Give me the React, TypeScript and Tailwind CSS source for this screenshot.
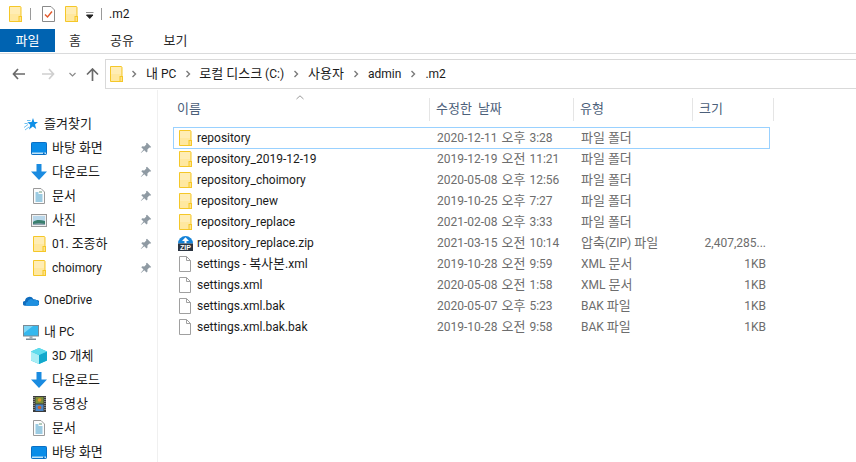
import React from "react";

const FONT = '"Roboto", "Noto Sans CJK KR", sans-serif';

/* Hangul in the picture runs on a 12px advance, wider than the latin beside it. */
function T({ children }: { children: string }) {
  const parts = children.split(/([\uac00-\ud7a3]+)/);
  return (
    <>
      {parts.map((p, i) =>
        i % 2 === 1 ? (
          <span key={i} className="text-[13px]">{p}</span>
        ) : (
          <React.Fragment key={i}>{p}</React.Fragment>
        )
      )}
    </>
  );
}

function Folder() {
  return (
    <svg width="13" height="16" viewBox="0 0 13 16">
      <path d="M.5.500h10.500a1 1 0 0 1 1 .8V15.500H.5z" fill="#ffe8a0" stroke="#f5c728" />
      <path d="M1 1h10v7H1z" fill="#ffedb5" />
      <rect x="10" y="10.500" width="2.500" height="5" fill="#ffe28a" stroke="#f5c728" />
    </svg>
  );
}

function Chevron() {
  return (
    <svg width="6" height="8" viewBox="0 0 6 8">
      <path d="M1.500 1l3 3-3 3" fill="none" stroke="#7a7a7a" strokeWidth="1.400" />
    </svg>
  );
}

function Pin() {
  return (
    <svg width="12" height="12" viewBox="0 0 12 12" className="mr-[5px] ml-auto">
      <path d="M7 .800l4.200 4.200-1.100.8-.7-.4-2 2 .1 2-1 1-2.200-2.200L1 11l-.2-.2 2.700-3.300L1.300 5.300l1-1 2 .1 2-2-.3-.8z" fill="#8f9aa3" />
    </svg>
  );
}

function Desktop() {
  return (
    <svg width="16" height="13" viewBox="0 0 16 13">
      <rect x=".5" y=".5" width="15" height="12" rx=".8" fill="#0a8de8" stroke="#0a6fc4" />
      <rect x="1" y="10.500" width="14" height="1.500" fill="#bfe3f8" />
      <rect x="12" y="10.500" width="1.500" height="1.500" fill="#0a6fc4" />
    </svg>
  );
}

function Download() {
  return (
    <svg width="16" height="16" viewBox="0 0 16 16">
      <path d="M5.500 0h5v7.500H16L8 16 0 7.500h5.500z" fill="#1a8be0" />
    </svg>
  );
}

function Doc() {
  return (
    <svg width="12" height="16" viewBox="0 0 12 16">
      <path d="M.5.500h7.500l3.500 3.500v11.500H.5z" fill="#fbfcfd" stroke="#9a9a9a" />
      <path d="M2.500 5h3M2.500 7h7M2.500 9h7M2.500 11h7M2.500 13h7" stroke="#3d9ac7" strokeWidth="1" />
      <path d="M6 4h3" stroke="#6a9a78" />
    </svg>
  );
}

function Pictures() {
  return (
    <svg width="16" height="13" viewBox="0 0 16 13">
      <rect x=".5" y=".5" width="15" height="12" fill="#f0f0f0" stroke="#979797" />
      <rect x="2" y="2" width="12" height="9" fill="#b9d7ea" />
      <path d="M2 8c3-2.500 7-2.500 12-1v4H2z" fill="#3a7f6e" />
      <path d="M2 10c4-1 8-1 12 0v1H2z" fill="#8fa3b0" />
    </svg>
  );
}

function Star() {
  return (
    <svg width="14" height="13" viewBox="0 0 14 13">
      <path d="M9 0l1.300 4 3.700.1-3 2.500 1.200 4.400-3.400-2.500L5 11.500l1.300-4.700-3-2.600 4.300-.2z" fill="#0f8fe6" />
      <path d="M0 9.500l4-3M.5 5.500h3M3 2.500h3.500M1 12l4-3" stroke="#6fc0f0" strokeWidth="1" />
    </svg>
  );
}

function Cloud() {
  return (
    <svg width="17" height="11" viewBox="0 0 17 11">
      <path d="M2.500 11a2.500 2.500 0 0 1-.4-5 4.800 4.800 0 0 1 9-1.800 3.500 3.500 0 0 1 3 .8 3 3 0 0 1 .9 6z" fill="#0f6cbd" />
      <path d="M5 11a2 2 0 0 1-.2-4 3.500 3.500 0 0 1 6.300-1.500 3 3 0 0 1 4.700 1A2.500 2.500 0 0 1 15 11z" fill="#1e90e0" />
    </svg>
  );
}

function Pc() {
  return (
    <svg width="16" height="15" viewBox="0 0 16 15">
      <rect x=".5" y=".5" width="15" height="10.500" fill="#35b8ee" stroke="#7a8a94" />
      <path d="M1 1h9L1 8z" fill="#7fd6f6" />
      <rect x="6.500" y="11" width="3" height="2.500" fill="#a3aeb5" />
      <rect x="3" y="13.500" width="10" height="1.500" fill="#7a8a94" />
    </svg>
  );
}

function Cube() {
  return (
    <svg width="16" height="16" viewBox="0 0 16 16">
      <path d="M8 0l8 3.500v9L8 16 0 12.500v-9z" fill="#25c6e0" />
      <path d="M0 3.500L8 7v9L0 12.500z" fill="#aaeef5" />
      <path d="M8 7l8-3.500v9L8 16z" fill="#12a8cc" />
      <path d="M8 0l8 3.500L8 7 0 3.500z" fill="#5fdcec" />
    </svg>
  );
}

function Film() {
  return (
    <svg width="13" height="16" viewBox="0 0 13 16">
      <rect width="13" height="16" fill="#3b3b3b" />
      <rect x="2.500" y="1" width="8" height="6.500" fill="#7c8f3a" />
      <rect x="2.500" y="8.500" width="8" height="6.500" fill="#4a86c8" />
      <circle cx="6.500" cy="4" r="1.800" fill="#e09a2a" />
      <circle cx="6.500" cy="11.500" r="1.800" fill="#c9622a" />
      <path d="M1 1v14M12 1v14" stroke="#c8c8c8" strokeWidth="1" strokeDasharray="1 1" />
    </svg>
  );
}

function Zip() {
  return (
    <svg width="15" height="15" viewBox="0 0 15 15">
      <path d="M7.500 0a7.500 7.500 0 0 1 7.500 7.500H0A7.500 7.500 0 0 1 7.500 0z" fill="#1583d8" />
      <path d="M7.500 1.200L11 5H8.500v2.500h-2V5H4z" fill="#fff" />
      <rect y="7.500" width="15" height="7.500" fill="#2b3440" />
      <text x="7.500" y="14" textAnchor="middle" fontSize="7" fontWeight="700" fill="#fff" fontFamily="Liberation Sans">ZIP</text>
    </svg>
  );
}

function BlankFile() {
  return (
    <svg width="12" height="16" viewBox="0 0 12 16">
      <path d="M.5.500h7l4 4v11H.5z" fill="#fff" stroke="#a0a0a0" />
      <path d="M7.500.500v4h4" fill="none" stroke="#a0a0a0" />
    </svg>
  );
}

function CheckDoc() {
  return (
    <svg width="13" height="16" viewBox="0 0 13 16">
      <path d="M.5.500h8.500l3.500 3.500v11.500H.5z" fill="#fff" stroke="#8a8a8a" />
      <path d="M3 8.500l2.500 2.500 4.500-5.500" fill="none" stroke="#e2582b" strokeWidth="1.400" />
    </svg>
  );
}

function NavItem({
  icon,
  label,
  pinned = false,
}: {
  icon: React.ReactNode;
  label: string;
  pinned?: boolean;
}) {
  return (
    <div className="flex h-[24px] items-center pl-[31px]">
      <span className="flex w-[16px] justify-center">{icon}</span>
      <span className="ml-[5px] text-[12px] text-[#1a1a1a]"><T>{label}</T></span>
      {pinned && <Pin />}
    </div>
  );
}

function NavHead({ icon, label }: { icon: React.ReactNode; label: string }) {
  return (
    <div className="flex h-[24px] items-center pl-[23px]">
      <span className="flex w-[16px] justify-center">{icon}</span>
      <span className="ml-[5px] text-[12px] text-[#1a1a1a]"><T>{label}</T></span>
    </div>
  );
}

type Row = { name: string; date: string; type: string; size: string; icon: "folder" | "zip" | "file" };

const rows: Row[] = [
  { name: "repository", date: "2020-12-11 오후 3:28", type: "파일 폴더", size: "", icon: "folder" },
  { name: "repository_2019-12-19", date: "2019-12-19 오전 11:21", type: "파일 폴더", size: "", icon: "folder" },
  { name: "repository_choimory", date: "2020-05-08 오후 12:56", type: "파일 폴더", size: "", icon: "folder" },
  { name: "repository_new", date: "2019-10-25 오후 7:27", type: "파일 폴더", size: "", icon: "folder" },
  { name: "repository_replace", date: "2021-02-08 오후 3:33", type: "파일 폴더", size: "", icon: "folder" },
  { name: "repository_replace.zip", date: "2021-03-15 오전 10:14", type: "압축(ZIP) 파일", size: "2,407,285...", icon: "zip" },
  { name: "settings - 복사본.xml", date: "2019-10-28 오전 9:59", type: "XML 문서", size: "1KB", icon: "file" },
  { name: "settings.xml", date: "2020-05-08 오전 1:58", type: "XML 문서", size: "1KB", icon: "file" },
  { name: "settings.xml.bak", date: "2020-05-07 오후 5:23", type: "BAK 파일", size: "1KB", icon: "file" },
  { name: "settings.xml.bak.bak", date: "2019-10-28 오전 9:58", type: "BAK 파일", size: "1KB", icon: "file" },
];

function FileRow({ row, selected }: { row: Row; selected: boolean }) {
  return (
    <div
      className={
        selected
          ? "flex h-[22px] w-[597px] items-center border border-[#99d1ff] text-[12px]"
          : "-mt-px flex h-[22px] w-[597px] items-center border border-transparent text-[12px]"
      }
    >
      <span className="flex w-[23px] justify-center pr-[1px]">
        {row.icon === "folder" && <Folder />}
        {row.icon === "zip" && <Zip />}
        {row.icon === "file" && <BlankFile />}
      </span>
      <span className="w-[240px] truncate text-[#1a1a1a]"><T>{row.name}</T></span>
      <span className="w-[144px] text-[#6d6d6d] [word-spacing:1px]"><T>{row.date}</T></span>
      <span className="w-[100px] text-[#6d6d6d]"><T>{row.type}</T></span>
      <span className="w-[85px] text-right text-[#6d6d6d]">{row.size}</span>
    </div>
  );
}

function HeaderCell({ label, width, sort = false }: { label: string; width: string; sort?: boolean }) {
  return (
    <div className={`relative flex h-[23px] items-center border-r border-[#e5e5e5] pb-[2px] pl-[6px] text-[12px] text-[#4c607a] ${width}`}>
      <span className="[word-spacing:3px]"><T>{label}</T></span>
      {sort && (
        <svg width="8" height="5" viewBox="0 0 8 5" className="absolute top-[-3px] left-[125px]">
          <path d="M.5 4L4 .8 7.500 4" fill="none" stroke="#9a9a9a" />
        </svg>
      )}
    </div>
  );
}

export default function App() {
  return (
    <div className="flex h-[462px] w-[856px] flex-col overflow-hidden bg-white" style={{ fontFamily: FONT }}>
      {/* Title bar */}
      <div className="flex h-[28px] items-center pl-[9px]">
        <Folder />
        <span className="ml-[8px] h-[12px] w-px bg-[#9a9a9a]" />
        <span className="ml-[11px]"><CheckDoc /></span>
        <span className="ml-[10px]"><Folder /></span>
        <svg width="8" height="7" viewBox="0 0 8 7" className="mt-[3px] ml-[8px]">
          <path d="M0 0h7.500M.5 3h6.500L3.750 6.500z" fill="#222" stroke="#222" strokeWidth="1" />
        </svg>
        <span className="ml-[7px] h-[12px] w-px bg-[#9a9a9a]" />
        <span className="ml-[7px] text-[12px] text-[#1a1a1a]">.m2</span>
      </div>

      {/* Ribbon tabs */}
      <div className="flex h-[26px] border-b border-[#dadbdc] pt-px text-[13px] text-[#2b2b2b]">
        <div className="flex h-[23px] w-[55px] items-center justify-center bg-[#0063b1] text-white">파일</div>
        <div className="flex h-[23px] w-[40px] items-center justify-center">홈</div>
        <div className="flex h-[23px] w-[54px] items-center justify-center">공유</div>
        <div className="flex h-[23px] w-[53px] items-center justify-center">보기</div>
      </div>

      {/* Navigation */}
      <div className="flex h-[36px] items-start pt-[5px]">
        <div className="flex h-[30px] w-[105px] items-center pl-[12px]">
          <svg width="13" height="12" viewBox="0 0 13 12"><path d="M6 1L1.500 6 6 11M2 6h11" fill="none" stroke="#6a6a6a" strokeWidth="1.700" /></svg>
          <svg width="13" height="12" viewBox="0 0 13 12" className="ml-[17px]"><path d="M7 1l4.500 5L7 11M11 6H0" fill="none" stroke="#cfcfcf" strokeWidth="1.700" /></svg>
          <svg width="7" height="5" viewBox="0 0 7 5" className="ml-[14px]"><path d="M.5 1l3 3 3-3" fill="none" stroke="#8a8a8a" strokeWidth="1.200" /></svg>
          <svg width="13" height="13" viewBox="0 0 13 13" className="ml-[10px]"><path d="M1 6.500l5.500-5.500L12 6.500M6.500 1.500V13" fill="none" stroke="#6a6a6a" strokeWidth="1.700" /></svg>
        </div>
        <div className="flex h-[30px] flex-1 items-center border-t border-b border-l border-[#d9d9d9] pl-[4px] text-[12px] text-[#1a1a1a]">
          <Folder />
          <span className="ml-[8px]"><Chevron /></span>
          <span className="ml-[9px]"><T>내 PC</T></span>
          <span className="ml-[9px]"><Chevron /></span>
          <span className="ml-[8px]"><T>로컬 디스크 (C:)</T></span>
          <span className="ml-[9px]"><Chevron /></span>
          <span className="ml-[9px]"><T>사용자</T></span>
          <span className="ml-[9px]"><Chevron /></span>
          <span className="ml-[9px]">admin</span>
          <span className="ml-[9px]"><Chevron /></span>
          <span className="ml-[9px]">.m2</span>
        </div>
      </div>

      {/* Body */}
      <div className="flex min-h-0 flex-1">
        <aside className="w-[158px] shrink-0 border-r border-[#f0f0f0] pt-[22px]">
          <NavHead icon={<Star />} label="즐겨찾기" />
          <NavItem icon={<Desktop />} label="바탕 화면" pinned />
          <NavItem icon={<Download />} label="다운로드" pinned />
          <NavItem icon={<Doc />} label="문서" pinned />
          <NavItem icon={<Pictures />} label="사진" pinned />
          <NavItem icon={<Folder />} label="01. 조종하" pinned />
          <NavItem icon={<Folder />} label="choimory" pinned />
          <div className="h-[8px]" />
          <NavHead icon={<Cloud />} label="OneDrive" />
          <div className="h-[8px]" />
          <NavHead icon={<Pc />} label="내 PC" />
          <NavItem icon={<Cube />} label="3D 개체" />
          <NavItem icon={<Download />} label="다운로드" />
          <NavItem icon={<Film />} label="동영상" />
          <NavItem icon={<Doc />} label="문서" />
          <NavItem icon={<Desktop />} label="바탕 화면" />
        </aside>

        <main className="min-w-0 flex-1 pt-[8px]">
          <div className="ml-[13px] flex">
            <HeaderCell label="이름" width="w-[259px]" sort />
            <HeaderCell label="수정한 날짜" width="w-[144px]" />
            <HeaderCell label="유형" width="w-[119px]" />
            <HeaderCell label="크기" width="w-[81px]" />
          </div>
          <div className="mt-[6px] ml-[15px] flex flex-col">
            {rows.map((row, i) => (
              <FileRow key={row.name} row={row} selected={i === 0} />
            ))}
          </div>
        </main>
      </div>
    </div>
  );
}
